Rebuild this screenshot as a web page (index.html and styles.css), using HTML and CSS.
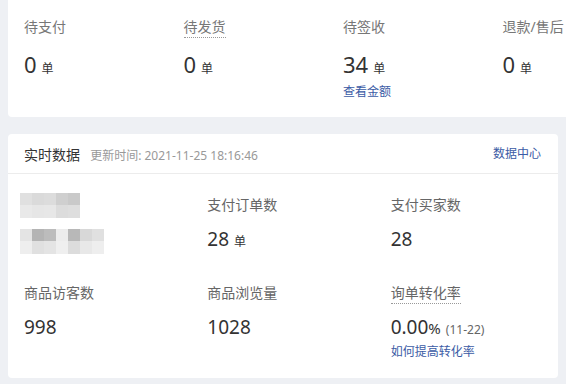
FILE: index.html
```html
<!DOCTYPE html>
<html>
    <head>
        <meta charset="utf-8">
        <title>订单概况</title>
        <link rel="stylesheet" href="styles.css">
    </head>
    <body>
        <div class="card orders">
            <div class="order">
                <div class="label">待支付</div>
                <div class="num">0<span class="unit">单</span></div>
            </div>
            <div class="order">
                <div class="label"><span class="dotted">待发货</span></div>
                <div class="num">0<span class="unit">单</span></div>
            </div>
            <div class="order">
                <div class="label">待签收</div>
                <div class="num">34<span class="unit">单</span></div>
                <a class="link">查看金额</a>
            </div>
            <div class="order">
                <div class="label">退款/售后</div>
                <div class="num">0<span class="unit">单</span></div>
            </div>
        </div>

        <div class="card realtime">
            <div class="head">
                <div>
                    <span class="title">实时数据</span>
                    <span class="time">更新时间: 2021-11-25 18:16:46</span>
                </div>
                <a class="link">数据中心</a>
            </div>
            <div class="stats">
                <div class="stat masked">
                    <div class="blur top"><span></span><span></span><span></span><span></span><span></span></div>
                    <div class="blur bottom"><span></span><span></span><span></span><span></span><span></span><span></span><span></span></div>
                </div>
                <div class="stat">
                    <div class="label">支付订单数</div>
                    <div class="value">28<span class="unit">单</span></div>
                </div>
                <div class="stat">
                    <div class="label">支付买家数</div>
                    <div class="value">28</div>
                </div>
                <div class="stat">
                    <div class="label">商品访客数</div>
                    <div class="value">998</div>
                </div>
                <div class="stat">
                    <div class="label">商品浏览量</div>
                    <div class="value">1028</div>
                </div>
                <div class="stat">
                    <div class="label"><span class="dotted">询单转化率</span></div>
                    <div class="value">0.00<span class="pct">%</span><span class="range">(11-22)</span></div>
                    <a class="link">如何提高转化率</a>
                </div>
            </div>
        </div>
    </body>
</html>
```

FILE: styles.css
```css
html, body {
    overflow: hidden;
}
body {
    margin: 0;
    padding: 0 8px;
    background-color: #eef0f4;
    font-family: "Noto Sans", "Noto Sans CJK SC", sans-serif;
    color: #333;
}
.card {
    background-color: #fff;
    border-radius: 4px;
}
.link {
    display: block;
    height: 18px;
    font-size: 12px;
    line-height: 18px;
    color: #3b5ba5;
    cursor: pointer;
}
.unit {
    font-size: 12px;
    margin-left: 5px;
}
.dotted {
    display: inline-block;
    height: 20px;
    border-bottom: 1px dotted #999;
}
.label {
    height: 20px;
    font-size: 14px;
    line-height: 20px;
    color: #777;
}
/* top: order states */
.orders {
    margin-top: -8px;
    width: 670px;
    height: 125px;
    box-sizing: border-box;
    padding: 25px 16px 0;
    display: flex;
}
.order {
    width: 159.5px;
    flex: none;
}
.order .num {
    height: 28px;
    margin-top: 13px;
    font-size: 22px;
    line-height: 28px;
}
.order .link {
    margin-top: 5px;
}
/* realtime data */
.realtime {
    margin-top: 17px;
    width: 550px;
}
.head {
    height: 39px;
    padding: 0 17px 0 16px;
    border-bottom: 1px solid #ececec;
    display: flex;
    align-items: center;
    justify-content: space-between;
}
.title {
    font-size: 14px;
    color: #333;
}
.time {
    margin-left: 6px;
    font-size: 12px;
    color: #999;
}
.stats {
    display: grid;
    grid-template-columns: repeat(3, 1fr);
    row-gap: 32px;
    padding: 21px 0 17px;
}
.stat {
    padding-left: 16px;
}
.stat .label {
    color: #666;
}
.stat .value {
    height: 24px;
    margin-top: 12px;
    font-size: 19px;
    line-height: 24px;
}
.stat .link {
    margin-top: 4px;
}
.pct {
    font-size: 15px;
}
.range {
    margin-left: 5px;
    font-size: 12px;
    color: #666;
}
/* masked shop info */
.masked {
    height: 56px;
}
.blur {
    display: flex;
    margin-left: -4px;
    filter: blur(0.6px);
}
.blur span {
    width: 12px;
    height: 25px;
}
.blur.top {
    margin-top: -2px;
}
.blur.bottom {
    margin-top: 11px;
}
.blur.top span:nth-child(1) { background: linear-gradient(#e0e0e0 50%, #e9e9e9 50%); }
.blur.top span:nth-child(2) { background: linear-gradient(#dadada 50%, #e6e6e6 50%); }
.blur.top span:nth-child(3) { background: linear-gradient(#dcdcdc 50%, #e7e7e7 50%); }
.blur.top span:nth-child(4) { background: linear-gradient(#cfcfcf 50%, #dcdcdc 50%); }
.blur.top span:nth-child(5) { background: linear-gradient(#c9c9c9 50%, #dedede 50%); }
.blur.bottom span:nth-child(1) { background: linear-gradient(#e4e4e4 50%, #eeeeee 50%); }
.blur.bottom span:nth-child(2) { background: linear-gradient(#b4b4b4 50%, #e0e0e0 50%); }
.blur.bottom span:nth-child(3) { background: linear-gradient(#bcbcbc 50%, #e4e4e4 50%); }
.blur.bottom span:nth-child(4) { background: linear-gradient(#ececec 50%, #efefef 50%); }
.blur.bottom span:nth-child(5) { background: linear-gradient(#b8b8b8 50%, #dcdcdc 50%); }
.blur.bottom span:nth-child(6) { background: linear-gradient(#d8d8d8 50%, #e8e8e8 50%); }
.blur.bottom span:nth-child(7) { background: linear-gradient(#e0e0e0 50%, #eeeeee 50%); }
```
